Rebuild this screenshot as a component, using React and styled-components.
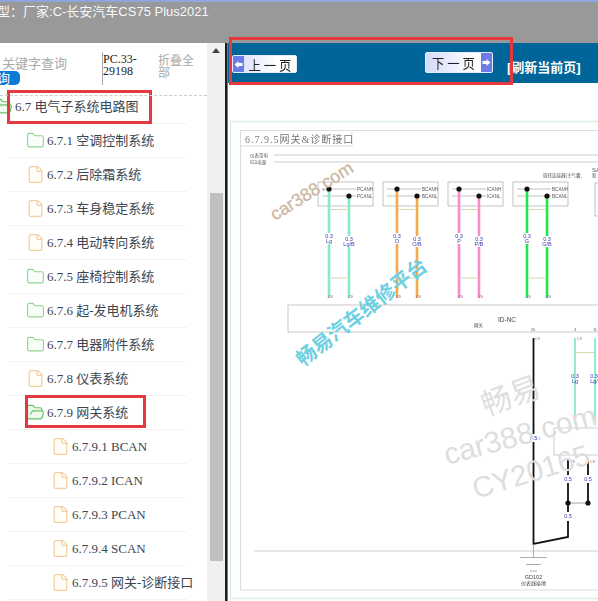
import React from 'react'
import styled, { createGlobalStyle } from 'styled-components'
import { Folder, FolderOpen, File } from 'lucide-react'

const GlobalStyle = createGlobalStyle`
    html, body {
        margin: 0;
        padding: 0;
        background: #fff;
    }
`

const CJK = `"Noto Sans CJK SC", sans-serif`

const Page = styled.div`
    width: 598px;
    height: 601px;
    display: flex;
    flex-direction: column;
    overflow: hidden;
    position: relative;
`
const TopBar = styled.div`
    height: 43px;
    box-sizing: border-box;
    flex: none;
    background: #999;
    border-top: 2px solid #8ea6dc;
    color: #f8f8f8;
    font: 13px/18px "Liberation Sans", ${CJK};
    padding-top: 1px;
    white-space: nowrap;
    span {
        margin-left: -3px;
    }
`
const Body = styled.div`
    flex: 1;
    display: flex;
    min-height: 0;
`
const Sidebar = styled.div`
    width: 207px;
    flex: none;
    overflow: hidden;
    background: #fff;
`
const SearchHead = styled.div`
    height: 53px;
    box-sizing: border-box;
    border-bottom: 1px dashed #ccc;
    display: flex;
    position: relative;
    z-index: 1;
`
const SearchBox = styled.div`
    width: 102px;
    flex: none;
    padding-top: 13px;
    color: #aaa;
    font: 13px/15px "Liberation Serif", ${CJK};
    padding-left: 2px;
    box-sizing: border-box;
`
const SearchPill = styled.div`
    width: 20px;
    height: 14px;
    margin: 0 0 0 -2px;
    background: #0d7bd6;
    border-radius: 0 5px 5px 0;
    color: #fff;
    font: 13px/14px ${CJK};
    text-indent: -3px;
    overflow: hidden;
`
const CodeBox = styled.div`
    width: 56px;
    height: 33px;
    margin-top: 9px;
    flex: none;
    box-sizing: border-box;
    border-left: 1px solid #aaa;
    padding: 1px 0 0 0;
    color: #222;
    font: 12px/12px "Liberation Serif", serif;
`
const Collapse = styled.div`
    width: 38px;
    margin-top: 11px;
    color: #aaa;
    font: 12px/12px ${CJK};
`
const Tree = styled.div`
    margin-top: -6px;
`
const Row = styled.div`
    height: 34px;
    box-sizing: border-box;
    margin: 0 20px 0 9px;
    border-bottom: 1px solid #f3f3f3;
    display: flex;
    align-items: center;
    gap: 2px;
    padding-left: ${p => p.$indent}px;
    position: relative;
    white-space: nowrap;
    color: #3c4650;
    font: 13px/16px "Liberation Serif", ${CJK};
    svg {
        flex: none;
        margin-left: ${p => p.$shift || 0}px;
    }
`
const Mark = styled.div`
    position: absolute;
    box-sizing: border-box;
    border: 3px solid #e5383f;
    top: ${p => p.$top}px;
    left: ${p => p.$left}px;
    width: ${p => p.$width}px;
    height: ${p => p.$height}px;
    pointer-events: none;
`
const Track = styled.div`
    width: 18px;
    flex: none;
    background: #f0f0f0;
    display: flex;
    flex-direction: column;
    align-items: center;
`
const ArrowUp = styled.div`
    width: 0;
    height: 0;
    margin-top: 5px;
    border: 4px solid transparent;
    border-top: 0;
    border-bottom: 5px solid #444;
`
const Thumb = styled.div`
    width: 13px;
    height: 368px;
    margin-top: 140px;
    background: #c0c0c0;
`
const Divider = styled.div`
    width: 3px;
    flex: none;
    background: #1c1c1c;
    border-right: 1px solid #777;
    box-sizing: border-box;
`
const Main = styled.div`
    flex: 1;
    min-width: 0;
    display: flex;
    flex-direction: column;
    position: relative;
`
const NavBar = styled.div`
    height: 40px;
    flex: none;
    background: #006699;
    display: flex;
    align-items: flex-start;
`
const PageButton = styled.div`
    margin-top: ${p => p.$top}px;
    margin-left: ${p => p.$left}px;
    width: ${p => p.$width}px;
    height: ${p => p.$height}px;
    box-sizing: border-box;
    flex: none;
    display: flex;
    flex-direction: ${p => (p.$next ? 'row' : 'row-reverse')};
    border: 1px solid #e6ebff;
    border-radius: 2px;
    background: linear-gradient(90deg, #d5dafa, #fff 70%);
    color: #222;
    font: 13px/1 ${CJK};
    overflow: hidden;
`
const PageLabel = styled.div`
    flex: 1;
    display: flex;
    align-items: center;
    justify-content: center;
    gap: 3px;
    transform: scaleX(0.95);
`
const PageArrow = styled.div`
    width: 11px;
    flex: none;
    background: #6d7be6;
    display: flex;
    align-items: center;
    justify-content: center;
`
const Refresh = styled.div`
    margin: 17px 0 0 14px;
    color: #fff;
    font: bold 13px/16px "Liberation Sans", ${CJK};
    white-space: nowrap;
`
const Sheet = styled.svg`
    display: block;
    flex: 1;
    min-height: 0;
    width: 100%;
    font-family: "Liberation Sans", ${CJK};
`
const Blurred = styled.g`
    filter: blur(0.35px);
`

const rows = [
    { label: '6.7 电气子系统电路图', indent: 0, shift: -15, icon: 'open' },
    { label: '6.7.1 空调控制系统', indent: 17, icon: 'folder' },
    { label: '6.7.2 后除霜系统', indent: 17, icon: 'file' },
    { label: '6.7.3 车身稳定系统', indent: 17, icon: 'file' },
    { label: '6.7.4 电动转向系统', indent: 17, icon: 'file' },
    { label: '6.7.5 座椅控制系统', indent: 17, icon: 'folder' },
    { label: '6.7.6 起-发电机系统', indent: 17, icon: 'folder' },
    { label: '6.7.7 电器附件系统', indent: 17, icon: 'folder' },
    { label: '6.7.8 仪表系统', indent: 17, icon: 'file' },
    { label: '6.7.9 网关系统', indent: 17, icon: 'open' },
    { label: '6.7.9.1 BCAN', indent: 42, icon: 'file' },
    { label: '6.7.9.2 ICAN', indent: 42, icon: 'file' },
    { label: '6.7.9.3 PCAN', indent: 42, icon: 'file' },
    { label: '6.7.9.4 SCAN', indent: 42, icon: 'file' },
    { label: '6.7.9.5 网关-诊断接口', indent: 42, icon: 'file' },
]

const connectors = [
    { x: 318, a: 329, b: 349, color: '#86ecc8', high: 'PCANH', low: 'PCANL', code: 'Lg', code2: 'Lg/B', pins: ['2', '11'] },
    { x: 383, a: 397, b: 417, color: '#f4a94a', high: 'BCANH', low: 'BCANL', code: 'O', code2: 'O/B', pins: ['1', '11'] },
    { x: 448, a: 459, b: 479, color: '#f78cc9', high: 'ICANH', low: 'ICANL', code: 'P', code2: 'P/B', pins: ['3', '13'] },
    { x: 513, a: 527, b: 547, color: '#1fe84a', high: 'BCANH', low: 'BCANL', code: 'G', code2: 'G/B', pins: ['8', '16'] },
]

function TreeIcon({ type }) {
    if (type === 'open') return <FolderOpen size={19} color="#6cc06c" strokeWidth={1.5} fill="#eefaee" />
    if (type === 'folder') return <Folder size={19} color="#93d393" strokeWidth={1.4} fill="#f8fff8" />
    return <File size={19} color="#f2cf9f" strokeWidth={1.6} fill="#fffdf8" />
}

function WireLabel({ x, y, top, bottom }) {
    return (
        <g fill="#3a3ab8" fontSize="5.5" textAnchor="middle">
            <text x={x} y={y}>{top}</text>
            <text x={x} y={y + 5}>{bottom}</text>
        </g>
    )
}

function Connector({ x, a, b, color, high, low, code, code2, pins }) {
    return (
        <g>
            <rect x={x} y="182" width="55" height="24" fill="#fff" stroke="#aaa" strokeWidth="0.7" />
            <path d={`M${x + 4} 189H${x + 38}M${x + 4} 196H${x + 38}`} stroke="#999" strokeWidth="0.6" />
            <text x={x + 39} y="191" fontSize="4.6" fill="#555">{high}</text>
            <text x={x + 39} y="198" fontSize="4.6" fill="#555">{low}</text>
            <path d={`M${a} 189V298M${b} 196V298`} stroke={color} strokeWidth="2.6" fill="none" />
            <circle cx={a} cy="189" r="2.6" fill="#111" />
            <circle cx={b} cy="196" r="2.6" fill="#111" />
            <path d={`M${a + 2} 209.5H${b - 2}M${a + 2} 278H${b - 2}`} stroke="#d8d8a8" strokeWidth="1" />
            <rect x={a - 4} y="233" width="8" height="11" fill="#fff" />
            <rect x={b - 5} y="236" width="10" height="11" fill="#fff" />
            <WireLabel x={a} y={238} top="0.3" bottom={code} />
            <WireLabel x={b} y={241} top="0.3" bottom={code2} />
            <g fontSize="3.8" fill="#a050a0">
                <text x={a - 1} y="298">C9</text>
                <text x={b - 1} y="298">C9</text>
            </g>
            <g fontSize="4" fill="#666" textAnchor="middle">
                <text x={a} y="309">{pins[0]}</text>
                <text x={b} y="309">{pins[1]}</text>
            </g>
        </g>
    )
}

function Diagram() {
    return (
        <Sheet viewBox="228 83 370 518" preserveAspectRatio="xMinYMin slice">
            <Blurred>
                <path d="M598 121.5H230.5V598.5H598" fill="none" stroke="#dcefe4" strokeWidth="1.5" />
                <path d="M598 130.5H240.5V590H598" fill="none" stroke="#ddd" strokeWidth="1.2" />
                <path d="M352 130.5V146H240.5" fill="none" stroke="#ddd" />
                <text x="245" y="143" fontSize="10" letterSpacing="1" fill="#777" fontFamily={`"Liberation Serif", ${CJK}`}>6.7.9.5网关&amp;诊断接口</text>
                <g fontSize="4.5" fill="#555">
                    <text x="250" y="156.5">仪表带电</text>
                    <text x="250" y="163.5">IG1电源</text>
                    <text x="543" y="176.5">旋转连接器(主气囊、</text>
                    <text x="592" y="172" fontSize="6">SA</text>
                    <text x="592" y="177">新</text>
                </g>
                <path d="M274 155H598M274 162H598" stroke="#ccc" strokeWidth="1" />
                <rect x="595" y="183" width="20" height="33" fill="#fff" stroke="#aaa" strokeWidth="0.7" />

                {connectors.map(item => <Connector key={item.x} {...item} />)}

                <rect x="288" y="305" width="330" height="27" fill="#fff" stroke="#bbb" strokeWidth="0.8" />
                <text x="498" y="322" fontSize="6.5" fill="#444">ID-NC</text>
                <text x="474" y="327" fontSize="4.5" fill="#444">网关</text>
                <g fontSize="4" fill="#666" textAnchor="middle">
                    <text x="533" y="331">20</text>
                    <text x="575" y="331">3</text>
                    <text x="595" y="331">11</text>
                </g>

                <path d="M575 338V424M595 338V424" stroke="#86ecc8" strokeWidth="1.8" fill="none" />
                <path d="M576 352.5H594" stroke="#d8d8a8" strokeWidth="1" />
                <WireLabel x={575} y={378} top="0.3" bottom="Lg" />
                <WireLabel x={594} y={378} top="0.3" bottom="Lg/" />
                <rect x="554" y="428" width="70" height="27" fill="#fff" stroke="#bbb" strokeWidth="0.7" />

                <path d="M533.5 338V544L568 537V460" fill="none" stroke="#111" strokeWidth="1.8" />
                <path d="M588 460V503" fill="none" stroke="#111" strokeWidth="1.8" />
                <path d="M568 503H588" stroke="#888" strokeWidth="0.8" />
                <circle cx="568" cy="503" r="2.6" fill="#111" />
                <circle cx="588" cy="503" r="2.6" fill="#111" />
                <g fill="#fff">
                    <rect x="530" y="434" width="7" height="8" />
                    <rect x="564" y="475" width="8" height="8" />
                    <rect x="584" y="475" width="8" height="8" />
                    <rect x="564" y="512" width="8" height="9" />
                </g>
                <g fill="#3a3ab8" fontSize="5.5" textAnchor="middle">
                    <text x="533.5" y="440">0.5</text>
                    <text x="568" y="481">0.5</text>
                    <text x="588" y="481">0.5</text>
                    <text x="568" y="518">0.5</text>
                </g>
                <g fontSize="3.8" fill="#a050a0">
                    <text x="535" y="340">C9</text>
                    <text x="577" y="340">C9</text>
                    <text x="570" y="463">C9</text>
                    <text x="590" y="463">C9</text>
                </g>

                <path d="M254 551H598" stroke="#ccc" strokeWidth="1" />
                <path d="M533.5 544V557M520 557.5H547M526 564.5H541M530 571H537" stroke="#999" strokeWidth="0.8" fill="none" />
                <text x="533.5" y="579" fontSize="5.5" fill="#444" textAnchor="middle">GD102</text>
                <text x="533.5" y="585" fontSize="5" fill="#444" textAnchor="middle">仪表线接地</text>
            </Blurred>

            <text x="275" y="221" fontSize="18" stroke="#cdb7a3" strokeWidth="0.3" fill="#cdb7a3" transform="rotate(-32 275 221)">car388.com</text>
            <text x="303" y="367" fontSize="20" fontWeight="700" fill="#6fd0e2" transform="rotate(-38 303 367)">畅易汽车维修平台</text>
            <g fill="#dedede">
                <text x="486" y="416" fontSize="30" transform="rotate(-20 486 416)">畅易</text>
                <text x="447" y="465" fontSize="30" transform="rotate(-15 447 465)">car388.com</text>
                <text x="476" y="499" fontSize="29" transform="rotate(-17 476 499)">CY20165</text>
            </g>
        </Sheet>
    )
}

function App() {
    return (
        <Page>
            <GlobalStyle />
            <TopBar><span>型：</span>厂家:C-长安汽车CS75 Plus2021</TopBar>
            <Body>
                <Sidebar>
                    <SearchHead>
                        <SearchBox>
                            关键字查询
                            <SearchPill>询</SearchPill>
                        </SearchBox>
                        <CodeBox>PC.33-<br />29198</CodeBox>
                        <Collapse>折叠全部</Collapse>
                    </SearchHead>
                    <Tree>
                        {rows.map((row, i) => (
                            <Row key={i} $indent={row.indent} $shift={row.shift}>
                                <TreeIcon type={row.icon} />
                                {row.label}
                            </Row>
                        ))}
                    </Tree>
                </Sidebar>
                <Track>
                    <ArrowUp />
                    <Thumb />
                </Track>
                <Divider />
                <Main>
                    <NavBar>
                        <PageButton $top={12} $left={4} $width={65} $height={18}>
                            <PageLabel><span>上</span><span>一</span><span>页</span></PageLabel>
                            <PageArrow>
                                <svg width="9" height="9" viewBox="0 0 9 9"><path d="M0.5 4.5L4.5 1V3H8.5V6H4.5V8Z" fill="#fff" /></svg>
                            </PageArrow>
                        </PageButton>
                        <PageButton $next $top={9} $left={128} $width={68} $height={21}>
                            <PageLabel><span>下</span><span>一</span><span>页</span></PageLabel>
                            <PageArrow>
                                <svg width="9" height="9" viewBox="0 0 9 9"><path d="M8.5 4.5L4.5 1V3H0.5V6H4.5V8Z" fill="#fff" /></svg>
                            </PageArrow>
                        </PageButton>
                        <Refresh>[刷新当前页]</Refresh>
                    </NavBar>
                    <Diagram />
                </Main>
            </Body>
            <Mark $left={7} $top={90} $width={145} $height={34} />
            <Mark $left={25} $top={395} $width={121} $height={33} />
            <Mark $left={229} $top={37} $width={284} $height={48} />
        </Page>
    )
}

export default App
